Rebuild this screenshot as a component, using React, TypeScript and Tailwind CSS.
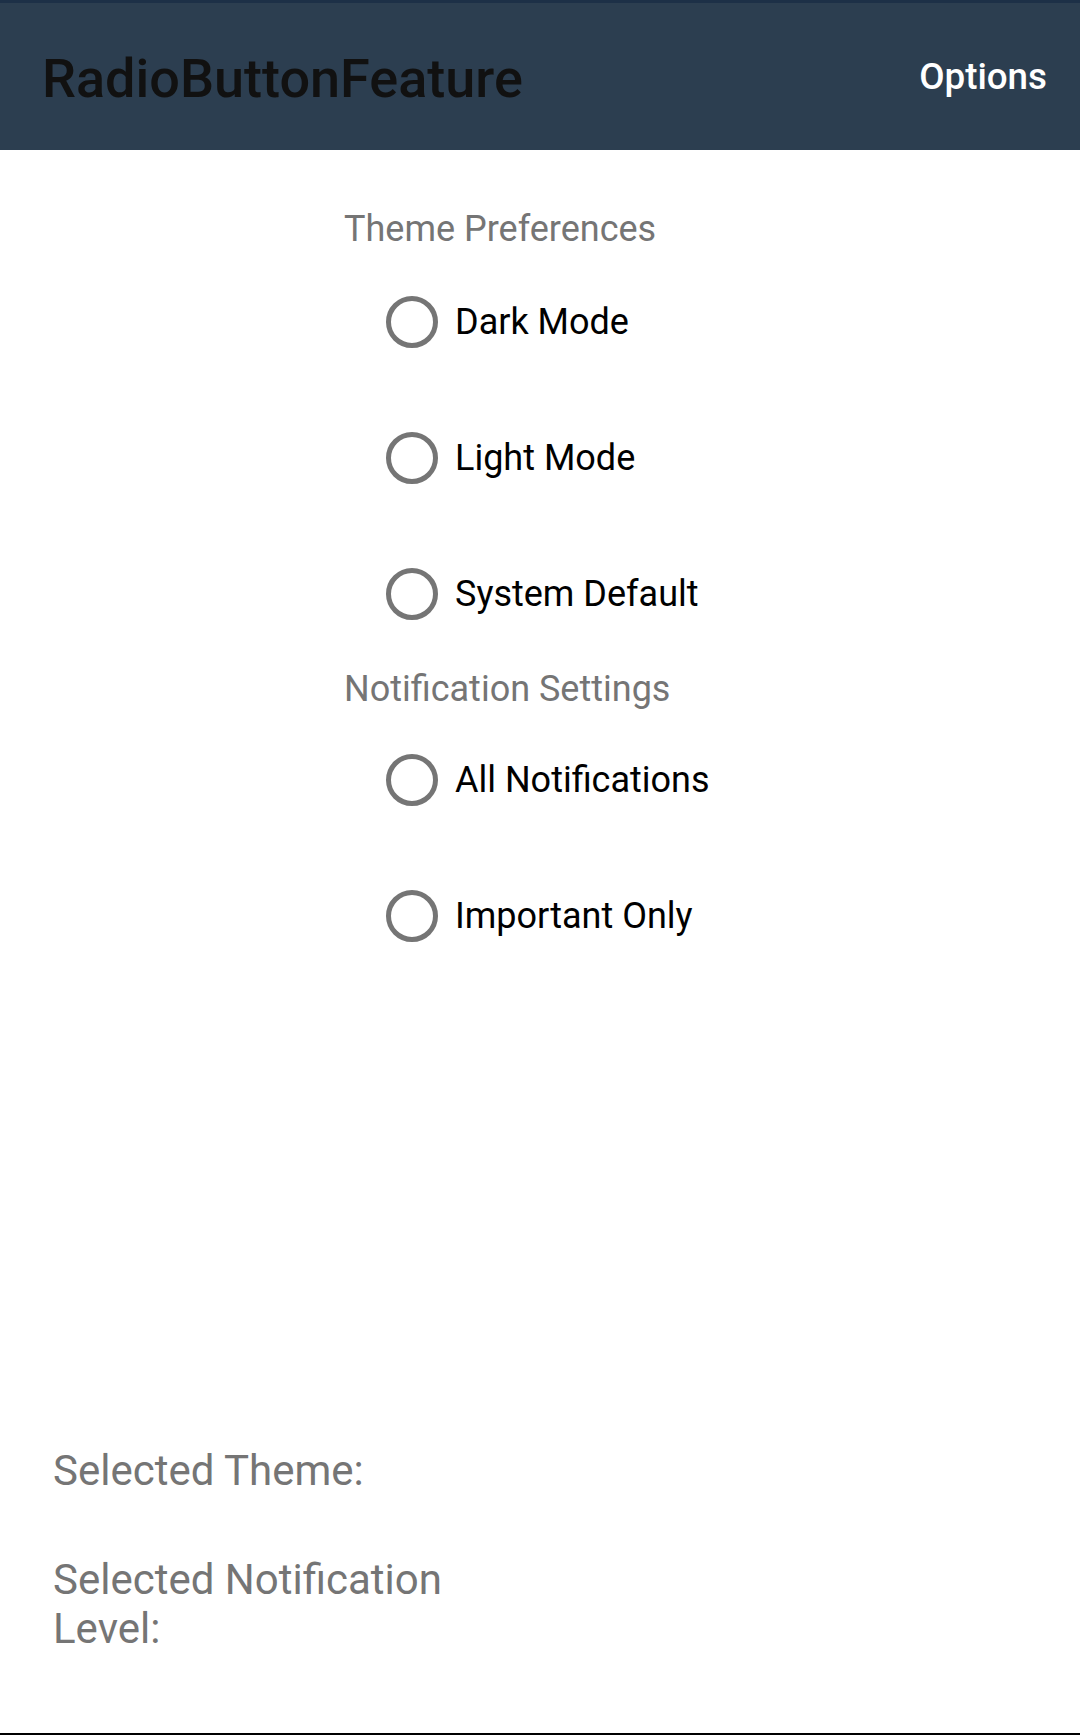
import React, { useState } from "react";

const themes = ["Dark Mode", "Light Mode", "System Default"];
const levels = ["All Notifications", "Important Only"];

function Radio({ label, checked, onSelect }: { label: string; checked: boolean; onSelect: () => void }) {
  return (
    <div className="h-[136px] flex items-center pl-[42px] cursor-pointer" onClick={onSelect}>
      <div className="w-[52px] h-[52px] rounded-full border-[5px] border-[#757575] flex items-center justify-center">
        {checked && <div className="w-[26px] h-[26px] rounded-full bg-[#757575]" />}
      </div>
      <span className="ml-[17px] text-[36px] leading-[43px] text-black">{label}</span>
    </div>
  );
}

export default function App() {
  const [theme, setTheme] = useState("");
  const [level, setLevel] = useState("");

  return (
    <div className="h-[1735px] flex flex-col bg-white font-['Roboto',sans-serif]">
      <div className="h-[3px] bg-[#1d3047]" />
      <header className="h-[147px] bg-[#2c3e50] flex items-center justify-between pl-[42px] pr-[33px]">
        <h1 className="text-[54px] leading-[61px] font-medium text-[#111111] mt-[3px]">RadioButtonFeature</h1>
        <button className="text-[36.75px] leading-[43px] font-medium text-white">Options</button>
      </header>

      <main className="flex-1 flex flex-col">
        <div className="pl-[344px]">
          <p className="mt-[58px] text-[36px] leading-[43px] text-[#757575]">Theme Preferences</p>
          <div className="mt-[3px]">
            {themes.map((t) => (
              <Radio key={t} label={t} checked={theme === t} onSelect={() => setTheme(t)} />
            ))}
          </div>
          <p className="mt-[6px] text-[36px] leading-[43px] text-[#757575]">Notification Settings</p>
          <div className="mt-[1px]">
            {levels.map((l) => (
              <Radio key={l} label={l} checked={level === l} onSelect={() => setLevel(l)} />
            ))}
          </div>
        </div>

        <div className="mt-auto pb-[80px] pl-[53px] w-[540px] text-[42px] leading-[49px] text-[#757575]">
          <p>Selected Theme: {theme}</p>
          <p className="mt-[60px]">Selected Notification Level: {level}</p>
        </div>
      </main>
      <div className="h-[2px] bg-black" />
    </div>
  );
}
